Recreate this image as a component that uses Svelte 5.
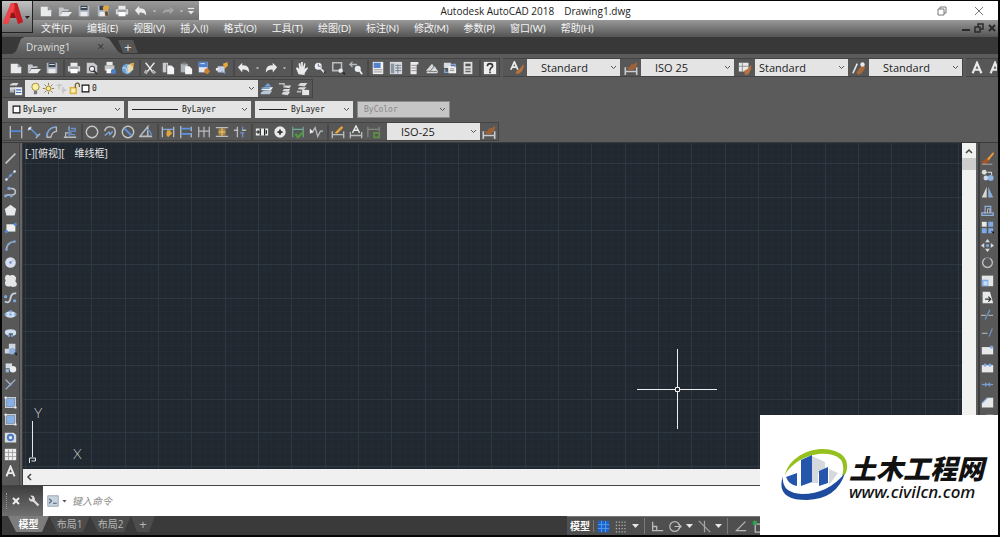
<script lang="ts">
	type Tool = [icon: string, label: string];

	const W = '#e9eaec';
	const B = '#7ea6dc';
	const G = '#b9bcc0';
	const O = '#e3a63c';

	const stroke = (d: string, color = G, width = 1.5) =>
		`<path d="${d}" fill="none" stroke="${color}" stroke-width="${width}"/>`;
	const fill = (d: string, color = W) => `<path d="${d}" fill="${color}"/>`;
	const dot = (x: number, y: number, color = B, r = 1.5) =>
		`<circle cx="${x}" cy="${y}" r="${r}" fill="${color}"/>`;

	const icons: Record<string, string> = {
		new: fill('M2 3h8l4 4v7H2z') + fill('M10 3v4h4z', '#8a8d90'),
		open: fill('M1 4h5l1 2h5v2H5l-3 6H1z', '#c3c6ca') + fill('M5 9h11l-4 5H2z'),
		save: fill('M2 2h12v12H2z', '#aeb6c2') + fill('M4 2h8v5H4z', '#3b4552') + fill('M4 9h8v5H4z') + stroke('M5 4h6', W, 1),
		saveas: fill('M2 2h12v12H2z', '#aeb6c2') + fill('M4 2h5v5H4z', '#3b4552') + fill('M4 9h6v5H4z') + fill('M8 3l5-2 2 3-3 4-4-1z', O) + fill('M10 9l3-1 1 5-3 1z', '#6b4a28'),
		print: fill('M4 2h8v4H4z') + fill('M1 6h14v6H1z', '#d5d8db') + fill('M4 9h8v5H4z', '#fff') + stroke('M3 8h10', '#555', 1),
		preview: fill('M2 2h8l4 3v9H2z', '#c9cbce') + '<circle cx="8" cy="9" r="3" fill="#eef" stroke="#444" stroke-width="1.2"/>' + stroke('M10 11l4 4', '#333', 2),
		publish: fill('M4 1h7v4H4z') + fill('M2 5h11v6H2z', '#c5c8cb') + fill('M4 9h6v5H4z', '#fff') + '<circle cx="12" cy="12" r="3" fill="#4f80c4"/>',
		web: '<circle cx="7" cy="9" r="6" fill="#6ea4d8"/>' + fill('M7 5l7-3v8l-6 4z', '#e8d9b0') + fill('M10 3l5-1-1 5z', O) + stroke('M2 8q5-2 5 6', W, 1),
		cut: stroke('M3 2l8 10M13 2L5 12', W, 1.6) + stroke('M3 11l2 1-1 2-2-1zM12 11l2 2-2 1-2-2z', G, 1.5),
		copy: fill('M2 2h6v11H2z', '#c9cbce') + fill('M7 5h5l3 3v7H7z', '#f4f4f4') + stroke('M6.500 4v10', '#555', 1),
		paste: fill('M2 3h8v10H2z', '#aeb1b5') + fill('M4 1h4v3H4z', '#777') + fill('M7 6h5l3 3v6H7z', '#f4f4f4'),
		match: fill('M2 1h10v12H2z', '#dfe4ee') + fill('M2 1h10v6H2z', '#4d7fd0') + fill('M9 9l3-1 3 4-3 3-4-2z', '#c9803a') + stroke('M4 3h5M4 10h4', W, 1),
		block: fill('M3 6h8v7H3z', '#c6d1e3') + fill('M1 8h3v3H1z', W) + fill('M9 3l5-2 1 4-4 4z', O) + stroke('M7 12l5 2', B),
		undo: fill('M1 7l5-5v3q8-1 8 8-3-4-8-3v3z', W),
		redo: fill('M15 7l-5-5v3q-8-1-8 8 3-4 8-3v3z', W),
		redoOff: fill('M15 7l-5-4v3q-8-1-8 5 3-3 8-2v3z', '#a2a4a6'),
		down: fill('M5 7h6l-3 3z', '#d0d0d0'),
		customize: stroke('M3 4h10', W, 2) + fill('M3 8h10l-5 5z', W),
		pan: fill('M4 15L1 8l2-1 2 2-1-6 2-1 1 5V1h2v6l2-5 1 1-1 6 3-2 1 1-4 6v2z'),
		zoomrt: '<circle cx="6" cy="6" r="4" fill="#edf1f5"/>' + stroke('M9 9l4 4', W, 2) + stroke('M6 3v3h3', '#667', 1) + fill('M12 12h3l-1.500 2z', '#222'),
		zoomwin: stroke('M2 2h10v9H2z', G, 1.8) + '<circle cx="11" cy="11" r="2.500" fill="#e8edf2"/>' + fill('M12 13h4v3z', '#222'),
		zoomprev: stroke('M1 4h8M4 1L1 4l3 3', G, 1.5) + '<circle cx="10" cy="9" r="3.500" fill="#e8edf2"/>' + stroke('M12 11l3 4', W, 2),
		props: fill('M2 1h12v14H2z', '#f1f1f1') + fill('M3 2h8v6H3z', '#5580d0') + stroke('M3 10h10M3 12.500h10', '#8c8c8c', 1),
		design: fill('M1 1h14v14H1z', '#d7dbe1') + fill('M2 3h4v11H2z', '#8a93a0') + stroke('M7 5h7M7 8h7M7 11h7M10 4v10', '#6c7683', 1),
		palette: fill('M4 1h9v3h-2v11H4z', '#e9e9e9') + stroke('M5 5h6M5 8h6M5 11h6', '#888', 1),
		sheet: fill('M1 11l7-8 2 3-4 5zM6 12l5-6 4 6-1 2H2v-2z', '#d8d9db') + stroke('M5 12h9', '#777', 1),
		markup: fill('M1 2h8v6H1z', '#d5dbe5') + fill('M6 6h9v8H6z', '#f2f2f2') + stroke('M9 4h5v3M2 9v4h4', B) + stroke('M8 9h5M8 11h5', '#888', 1),
		calc: fill('M3 1h10v14H3z', '#dedede') + fill('M5 3h6v3H5z', '#555') + stroke('M5 9h6M5 12h6', '#666', 1.5),
		help: fill('M1 1h14v14H1z', '#eee') + stroke('M5 6q0-3 3-3t3 3q0 1-2 2l-1 2v1M8 12v2', '#333', 1.8),
		textStyle: stroke('M1 10L5 1l4 9M3 7h4', W, 2) + fill('M7 12l4-3 1-1 3-4 1 1-2 6-3 3-4 1z', '#b9713e'),
		dimStyle: stroke('M1.500 7v9M14.500 7v9M2 12h12', '#c8ccd0', 1.8) + fill('M3 7q4 1 5-3l4-1 3-2v3l-2 4-4 3-4-1z', '#9c6238'),
		tableStyle: fill('M1 2h11v10H1z', '#e8e8e8') + stroke('M1 6h11M5 2v10', '#888', 1) + fill('M7 11l4-2 4-5v5l-3 6-4 1z', '#b9713e'),
		leaderStyle: stroke('M1 14L6 3', W, 1.8) + fill('M5 13l3-4 2-3 4-1 1 3-4 6-4 2z', '#a8683a') + dot(12, 4, W, 2.5),
		letterA: stroke('M3 14L8 2l5 12M5 10h6', W, 2.4),
		layers: fill('M1 3l3-2h7L9 4H1zM1 6h7l-2 3H1z', '#d4d7db') + fill('M1 9h5v3H1z', '#aeb5bd') + fill('M7 6h8v9H7z', '#e9eef5') + stroke('M8 9h6M8 12h6', '#4876b5', 1.2),
		layerCurrent: fill('M1 9l4-3h10l-3 4z', '#eee') + fill('M1 12l3-2h10l-3 4H1z', '#b8c6d8') + fill('M5 5l4-4 4 4z', '#6ea4e0') + fill('M2 6h9v2H2z', '#6fa0d0'),
		layerPrev: fill('M6 6l2-2h7l-2 3zM5 10l2-2h7l-2 3zM4 14l2-3h8l-3 4z', '#d7d9dc') + stroke('M1 2h6v4', G),
		layerStates: fill('M2 4l3-3h8l-3 4zM2 8l2-2h8l-3 3z', '#d9dbde') + fill('M7 9h8v6H7z', '#e6e6e6') + stroke('M1 11h5', G, 2),
		bulb: '<circle cx="8" cy="6" r="4.500" fill="#fff0a0" stroke="#8b7a35"/>' + fill('M6 11h4v4H6z', '#777'),
		sun: '<circle cx="8" cy="8" r="3" fill="#ffe978" stroke="#806d2a"/>' + stroke('M8 1v3M8 12v3M1 8h3M12 8h3M3 3l2 2M11 11l2 2M3 13l2-2M11 5l2-2', '#806d2a', 1),
		freeze: stroke('M2 4h7M5 2v7M10 6v8M8 10h6', '#c0c0c0', 1.5) + dot(11, 10, '#c8c8c8', 2),
		lock: fill('M2 6h9v9H2z', '#d9b24a') + stroke('M9 7V3q3-3 5 0v3', '#6d5a2a', 1.5) + fill('M4 8h5v5H4z', '#fff1b0'),
		swatch: '<path d="M2 2h12v12H2z" fill="#fff" stroke="#111" stroke-width="2"/>',
		dimLinear: stroke('M1.500 1v14M14.500 1v14', G) + stroke('M2 7h12', '#4f87dc', 2),
		dimAligned: stroke('M1 6l4-4M10 15l5-5', G) + stroke('M4 4l8 8', '#5f92dc', 1.8) + dot(3, 4, W) + dot(12, 12),
		dimArc: stroke('M2 14Q2 3 13 2', B, 2) + stroke('M7 14q0-6 7-7M2 14h5M13 2v5', G),
		dimOrd: stroke('M1 14h14M3 14V9h4M7 6V2', G) + stroke('M9 4h5v3H9v4h5M7 1v12', '#6b93cc'),
		dimRadius: '<circle cx="8" cy="8" r="6.500" fill="none" stroke="#c5c8cb" stroke-width="1.600"/>',
		dimJog: stroke('M2 7Q3 2 8 2q6 0 6 6 0 4-3 6', G, 1.8) + stroke('M2 12l5-4 1 3 3-4', B),
		dimDia: '<circle cx="8" cy="8" r="6.500" fill="none" stroke="#c5c8cb" stroke-width="1.600"/>' + stroke('M4 4l8 8', '#5f92dc', 2.2),
		dimAngle: stroke('M1 13L10 2v11zM1 13h14', G, 1.8) + stroke('M9 5q5 2 5 7', '#5f92dc'),
		dimQuick: stroke('M1.500 2v12M14.500 2v12', G) + stroke('M2 5h12', B) + fill('M7 6h4v2l2 1-2 2-3 3-2-3z', O),
		dimBase: stroke('M2 1v14M14 2v5M14 9v5', G) + stroke('M2 4h12M2 10h12', '#5f92dc', 2),
		dimCont: stroke('M2 2v12M8 2v12M14 2v12M2 7h12', G, 1.4),
		dimSpace: stroke('M1 3h14M1 13h14', G) + fill('M4 4h8v8H4z', '#aa8740') + stroke('M8 3v10M4 8h8', '#f3d080', 1),
		dimBreak: stroke('M1 6h5M10 6h5M5 2v12', G) + stroke('M11 2v4M11 9v5M8 9h5', '#6b93cc'),
		tolerance: fill('M1 4h14v8H1z') + stroke('M6 4v8M11 4v8M3.500 6v4M1 8h5M13 6v4', '#222', 1.4),
		centerMark: '<circle cx="8" cy="8" r="6.500" fill="#e9e9e9"/>' + stroke('M8 5v6M5 8h6', '#333', 2),
		inspect: stroke('M2 2v12M14 2v12M2 5h12', '#6fae9a', 1.2) + stroke('M5 10l3 4 6-6', '#4e9c3a', 2.5),
		jogLine: stroke('M1 8h3l3-5 3 10 3-6h3', G) + fill('M1 4l4 4-4 2z'),
		dimEdit: stroke('M1.500 7v8M14.500 7v8M2 11h12', G) + fill('M4 9l8-8 2 2-7 7z', O),
		dimTextEdit: stroke('M1.500 8v7M14.500 8v7M2 12h12', G) + stroke('M4 9l4-8 4 8M6 6h4', W),
		dimUpdate: stroke('M1 2v12M14 2v5M1 5h13', '#80877e') + stroke('M8 9h6v5H8z', '#5f8f45', 2),
		line: stroke('M2 14L14 2', '#c7cace', 1.8),
		xline: stroke('M2 14L14 2', '#5e8cd0', 1.5) + dot(3, 13, W) + dot(13, 3, W) + dot(8, 8),
		pline: stroke('M5 3h4q5 0 5 4t-5 4H3', '#c2c6cc', 1.8) + dot(2, 12, B, 2) + dot(9, 12, B, 2) + dot(6, 3, B, 2),
		polygon: fill('M8 1l7 5-2 8H3L1 6z', '#e6e7e8'),
		rect: fill('M3 4h11v9H3z', '#eceded') + dot(3, 13, '#4f87dc', 2) + dot(14, 4, '#4f87dc', 2),
		arc: stroke('M3 14Q3 4 13 3', '#9db4d2', 1.8) + dot(3, 13) + dot(13, 3) + dot(6, 6),
		circle: '<circle cx="8" cy="8" r="6.500" fill="#d9dfee"/>' + dot(8, 8, '#6285c8', 1.5) + stroke('M8 8l4-3', '#8fa9db', 1),
		cloud: fill('M2 2q3-2 5 0 4-2 7 1l1 2-1 4 2 3-1 3-4 1-3-1q-4 1-6-1l-1-3 1-3-1-3z', '#e4e5e6'),
		spline: stroke('M1 13q6 3 7-4t7-6', '#c4d2e3', 2.2) + dot(2, 7, B, 2) + dot(13, 12, B, 2),
		ellipse: '<ellipse cx="8" cy="8" rx="7" ry="4" fill="#cfdff0"/>' + dot(8, 8) + dot(2, 8) + dot(14, 8) + dot(8, 4),
		ellipseArc: '<path d="M1 8q0-4 7-4t7 4-4 4v-3H6v3Q1 11 1 8" fill="#cfdff0"/>' + dot(6, 12) + dot(10, 12),
		insert: fill('M6 1h8v7H6zM1 7h6v6H1z', '#cdd5df') + '<circle cx="10" cy="10" r="4" fill="#8fb2e0"/>' + fill('M12 12h4v4z', '#222'),
		makeBlock: fill('M2 3h8v6H2z', '#d5dce5') + '<circle cx="11" cy="10" r="4" fill="#e9ecf0"/>' + fill('M2 10h4v4H2z', '#94b8e8'),
		point: stroke('M2 2l6 6 6-6M8 8l-6 6', '#aab6c8', 1.6) + dot(8, 8),
		hatch: fill('M3 3h10v10H3z', '#87b0e6') + stroke('M2 2h12v12H2z', '#c8cdd5', 1.5) + dot(2, 2, W) + dot(14, 14, W),
		region: fill('M1 2h11l3 3v9H1z', '#d8dde4') + '<circle cx="8" cy="8" r="4.500" fill="#4c7cc4"/>' + dot(8, 8, W, 2),
		table: fill('M1 1h14v14H1z', '#eee') + stroke('M1 5.500h14M1 10.500h14M5.500 2v13M10.500 2v13', '#9a9a9a', 1),
		erase: fill('M7 9l8-9 1 2-7 9z', '#e69a3a') + fill('M2 11l5-3 3 3-4 4-4 0z', '#a55426') + stroke('M1 15h13', '#bbb', 1),
		copyObj: '<circle cx="4" cy="4" r="3" fill="#ddd"/><circle cx="6" cy="11" r="3" fill="#cfd8e5"/><circle cx="12" cy="11" r="3.500" fill="#8fb4e8"/>' + stroke('M8 4h5v3', W, 1.2),
		mirror: fill('M7 1v13H1z', '#d8d8d8') + fill('M9 1v13h6z', '#89afdc'),
		offset: stroke('M1 14h14v-3h-3V3H5v8H1z', '#8db0e2') + stroke('M4 11h7V6H8v5', '#ccd', 1),
		array: fill('M1 1h6v6H1z', '#e8e8e8') + fill('M9 1h6v6H9zM1 9h6v6H1zM9 9h6v6H9z', '#7fa9e6') + fill('M12 13h4v3z', '#111'),
		move: fill('M8 0l3 4H5zM8 16l3-4H5zM0 8l4-3v6zM16 8l-4-3v6z', '#d6dce5') + dot(8, 8, B, 2),
		rotate: stroke('M11 3a6 6 0 1 1-6 0', '#b9bdc2', 1.8) + stroke('M4 4q4-4 8 0', '#8e9297', 1.2),
		scale: fill('M1 2h14v13H1z', '#e4e6e8') + fill('M1 7h8v8H1z', '#7fa9e6') + fill('M3 9h5v5H3z', '#c9dcf6'),
		stretch: fill('M2 1h9l4 14H2z', '#e7e9eb') + stroke('M5 10h6M9 7l3 3-3 3', '#333', 1.5),
		trim: stroke('M0 9h6M9 9h6', '#a9adb2') + stroke('M5 14l6-12', '#6e93c8'),
		extend: stroke('M1 9h7', '#a9adb2') + stroke('M10 13l4-10', '#6e93c8'),
		breakAt: fill('M1 5h14v9H1z', '#e6e8ea') + dot(13, 5, '#7fa9e6', 2),
		break: fill('M1 5h14v9H1z', '#e6e8ea') + dot(5, 5, '#7fa9e6', 2) + dot(11, 5, '#7fa9e6', 2),
		join: stroke('M1 8h14', '#7b9ed0', 1.6) + fill('M5 5l3 3-3 3zM11 5L8 8l3 3z', '#7b9ed0'),
		chamfer: fill('M1 14V9l7-7h7v12z', '#e6e8ea') + stroke('M1 9l7-7', '#7fa9e6', 1.5),
		wrench: stroke('M7 7l7 7', '#dedede', 3) + fill('M1 3l3 3 2-2-3-3q5-1 6 3 1 5-3 5-5 0-5-6', '#dedede'),
		prompt: '<path d="M1 1h14v14H1z" fill="#c9d3de" stroke="#8494a5"/>' + stroke('M3 5l3 3-3 3M8 11h5', '#4a6078', 1.5),
		gridOn: fill('M1 1h14v14H1z', '#1e63c4') + stroke('M1 5.500h14M1 10.500h14M5.500 1v14M10.500 1v14', '#4f98f0', 1.2),
		snap: '<path d="M1 2.500h14M1 6.500h14M1 10.500h14M1 14.500h14" stroke="#b4b4b4" stroke-width="1.500" stroke-dasharray="1.500 2"/>',
		ortho: stroke('M2 2v11h13M2 8h5v5', G, 1.6),
		polar: '<circle cx="7" cy="8" r="6" fill="none" stroke="#b9bcc0" stroke-width="1.500"/>' + stroke('M7 8h8M12 5l3 3-3 3', G, 1.3),
		iso: stroke('M1 1l14 14M8 8V1M8 8v7', '#a3a6a9', 1.5),
		otrack: stroke('M14 2L3 13h12', G, 1.5),
		osnap: stroke('M4 5h10v10H4z', G, 1.6) + fill('M1 1h5v5H1z', '#2ea44f')
	};

	const menus = [
		'文件(F)', '编辑(E)', '视图(V)', '插入(I)', '格式(O)', '工具(T)',
		'绘图(D)', '标注(N)', '修改(M)', '参数(P)', '窗口(W)', '帮助(H)'
	];

	const quickAccess: Tool[] = [
		['new', '新建'], ['open', '打开'], ['save', '保存'], ['saveas', '另存为'], ['print', '打印'], ['undo', '放弃']
	];

	const standardGroups: Tool[][] = [
		[['new', '新建'], ['open', '打开'], ['save', '保存']],
		[['print', '打印'], ['preview', '打印预览'], ['publish', '发布'], ['web', '三维 DWF']],
		[['cut', '剪切'], ['copy', '复制'], ['paste', '粘贴'], ['match', '特性匹配'], ['block', '块编辑器']],
		[['undo', '放弃'], ['down', '放弃列表'], ['redo', '重做'], ['down', '重做列表']],
		[['pan', '平移'], ['zoomrt', '实时缩放'], ['zoomwin', '窗口缩放'], ['zoomprev', '缩放上一个']],
		[['props', '特性'], ['design', '设计中心'], ['palette', '工具选项板'], ['sheet', '图纸集'], ['markup', '标记集'], ['calc', '计算器']],
		[['help', '帮助']]
	];

	const styles = [
		{ icon: 'textStyle', label: '文字样式', value: 'Standard', tight: false },
		{ icon: 'dimStyle', label: '标注样式', value: 'ISO 25', tight: false },
		{ icon: 'tableStyle', label: '表格样式', value: 'Standard', tight: true },
		{ icon: 'leaderStyle', label: '多重引线样式', value: 'Standard', tight: false }
	];

	const layerTools: Tool[] = [
		['layerCurrent', '置为当前'], ['layerPrev', '上一个图层'], ['layerStates', '图层状态']
	];

	const dimensionGroups: Tool[][] = [
		[['dimLinear', '线性'], ['dimAligned', '对齐'], ['dimArc', '弧长'], ['dimOrd', '坐标']],
		[['dimRadius', '半径'], ['dimJog', '折弯'], ['dimDia', '直径'], ['dimAngle', '角度']],
		[['dimQuick', '快速标注'], ['dimBase', '基线'], ['dimCont', '连续'], ['dimSpace', '等距标注'], ['dimBreak', '折断标注']],
		[['tolerance', '公差'], ['centerMark', '圆心标记'], ['inspect', '检验'], ['jogLine', '折弯线性']],
		[['dimEdit', '编辑标注'], ['dimTextEdit', '编辑标注文字'], ['dimUpdate', '标注更新']]
	];

	const drawTools: Tool[] = [
		['line', '直线'], ['xline', '构造线'], ['pline', '多段线'], ['polygon', '多边形'], ['rect', '矩形'],
		['arc', '圆弧'], ['circle', '圆'], ['cloud', '修订云线'], ['spline', '样条曲线'], ['ellipse', '椭圆'],
		['ellipseArc', '椭圆弧'], ['insert', '插入块'], ['makeBlock', '创建块'], ['point', '点'], ['hatch', '图案填充'],
		['hatch', '渐变色'], ['region', '面域'], ['table', '表格'], ['letterA', '多行文字']
	];

	const modifyTools: Tool[] = [
		['erase', '删除'], ['copyObj', '复制'], ['mirror', '镜像'], ['offset', '偏移'], ['array', '阵列'],
		['move', '移动'], ['rotate', '旋转'], ['scale', '缩放'], ['stretch', '拉伸'], ['trim', '修剪'],
		['extend', '延伸'], ['breakAt', '打断于点'], ['break', '打断'], ['join', '合并'], ['chamfer', '倒角'],
		['chamfer', '圆角'], ['spline', '光顺曲线'], ['scale', '分解'], ['move', '绘图次序']
	];

	const layouts = ['模型', '布局1', '布局2'];
	const gridMinor = [7, 13, 20, 27, 40, 47, 53, 60, 73, 80, 87, 93];
	const gridMajor = [0, 33, 67];

	let activeLayout = $state('模型');
	let command = $state('');
	let cursor = $state({ x: 654, y: 246 });

	function trackCursor(e: MouseEvent) {
		const box = (e.currentTarget as HTMLElement).getBoundingClientRect();
		cursor = { x: Math.round(e.clientX - box.left), y: Math.round(e.clientY - box.top) };
	}
</script>

{#snippet icon(name: string)}
	<svg class="icon" viewBox="0 0 16 16" aria-hidden="true">{@html icons[name]}</svg>
{/snippet}

{#snippet tool([name, label]: Tool)}
	<button class="tool" class:narrow={name === 'down'} title={label} aria-label={label}>
		{@render icon(name)}
	</button>
{/snippet}

{#snippet groups(list: Tool[][])}
	{#each list as group}
		<div class="group">
			{#each group as item}{@render tool(item)}{/each}
		</div>
	{/each}
{/snippet}

<div class="app">
	<header>
		<button class="app-menu" aria-label="应用程序菜单">
			<svg viewBox="0 0 30 30" aria-hidden="true">
				<path d="M1 21L9 1h6l6 19-5 2-2-6H8l-2 6z" fill="#d8262c" />
				<path d="M9 1h5l-2 6-6 15-5-1z" fill="#ef4448" />
				<path d="M9 11h3l2 5H8z" fill="#8f1519" />
				<path d="M12 1h3l6 19-5 2z" fill="#c01d24" />
				<path d="M23 14h5l-3 3z" fill="#222" />
			</svg>
		</button>
		<div class="title-bar">
			<div class="quick-access">
				{#each quickAccess as item}{@render tool(item)}{/each}
				{@render tool(['down', '放弃列表'])}
				{@render tool(['redoOff', '重做'])}
				{@render tool(['down', '重做列表'])}
				{@render tool(['customize', '自定义'])}
			</div>
			<h1><span>Autodesk AutoCAD 2018</span><span>Drawing1.dwg</span></h1>
			<div class="window-buttons">
				<button aria-label="还原">
					<svg viewBox="0 0 10 10"><path d="M1 3h6v6H1zM3 3V1h6v6H7" fill="none" stroke="#777" /></svg>
				</button>
				<button aria-label="关闭">
					<svg viewBox="0 0 10 10"><path d="M1 1l8 8M9 1L1 9" stroke="#777" /></svg>
				</button>
			</div>
		</div>
		<nav class="menu-bar">
			{#each menus as menu}<button>{menu}</button>{/each}
			<div class="doc-buttons">
				<button aria-label="最小化图形">
					<svg viewBox="0 0 10 10"><path d="M1 7h8" stroke="#2b2b2b" stroke-width="2" /></svg>
				</button>
				<button aria-label="还原图形">
					<svg viewBox="0 0 10 10"><path d="M1 4h5v5H1zM4 4V1h5v5H6" fill="none" stroke="#2b2b2b" stroke-width="1.500" /></svg>
				</button>
				<button aria-label="关闭图形">
					<svg viewBox="0 0 10 10"><path d="M2 2l6 6M8 2L2 8" stroke="#2b2b2b" stroke-width="2" /></svg>
				</button>
			</div>
		</nav>
	</header>

	<div class="file-tabs">
		<div class="file-tab">
			<button class="tab-name">Drawing1</button>
			<button class="tab-close" aria-label="关闭选项卡">×</button>
		</div>
		<button class="new-tab" aria-label="新图形">+</button>
	</div>

	<div class="toolbars">
		<div class="bar-row">
			<div class="bar">{@render groups(standardGroups)}</div>
			<div class="bar styles">
				{#each styles as s}
					{@render tool([s.icon, s.label])}
					<select class="style-select" class:tight={s.tight} aria-label={s.label}>
						<option>{s.value}</option>
					</select>
				{/each}
			</div>
			<div class="bar text-bar">
				{@render tool(['letterA', '多行文字'])}
				{@render tool(['letterA', '单行文字'])}
			</div>
		</div>

		<div class="bar-row">
			<div class="bar">
				<div class="group">{@render tool(['layers', '图层特性'])}</div>
				<label class="combo layer">
					{#each ['bulb', 'sun', 'freeze', 'lock', 'swatch'] as name}{@render icon(name)}{/each}
					<select aria-label="图层"><option>0</option></select>
				</label>
				<div class="group">{#each layerTools as item}{@render tool(item)}{/each}</div>
			</div>
		</div>

		<div class="bar-row properties">
			<label class="combo color">
				{@render icon('swatch')}
				<select aria-label="颜色"><option>ByLayer</option></select>
			</label>
			<label class="combo linetype">
				<span class="sample"></span>
				<select aria-label="线型"><option>ByLayer</option></select>
			</label>
			<label class="combo weight">
				<span class="sample"></span>
				<select aria-label="线宽"><option>ByLayer</option></select>
			</label>
			<label class="combo plot">
				<select aria-label="打印样式" disabled><option>ByColor</option></select>
			</label>
		</div>

		<div class="bar-row">
			<div class="bar">
				{@render groups(dimensionGroups)}
				<select class="style-select" aria-label="当前标注样式"><option>ISO-25</option></select>
				{@render tool(['dimStyle', '标注样式管理器'])}
			</div>
		</div>
	</div>

	<main>
		<div class="side-bar">
			{#each drawTools as item}{@render tool(item)}{/each}
		</div>
		<div class="viewport">
			<!-- svelte-ignore a11y_no_static_element_interactions -->
			<div class="canvas" onmousemove={trackCursor}>
				<svg class="grid" width="100%" height="100%" aria-hidden="true">
					<defs>
						<pattern id="grid" x="35" y="54" width="100" height="101" patternUnits="userSpaceOnUse">
							{#each gridMinor as n}
								<path d="M{n} 0h1v101h-1zM0 {n}h100v1H0z" fill="#232b35" />
							{/each}
							{#each gridMajor as n}
								<path d="M{n} 0h1v101h-1zM0 {n}h100v1H0z" fill="#2e3842" />
							{/each}
						</pattern>
					</defs>
					<rect width="100%" height="100%" fill="url(#grid)" />
				</svg>
				<div class="view-label">
					<button>[-]</button><button>[俯视]</button><button>[　维线框]</button>
				</div>
				<svg class="ucs" viewBox="0 0 70 64" aria-hidden="true">
					<path d="M9.500 16v36M6.500 58v-5h6v3h-4" fill="none" stroke="#e4e6e8" />
					<text x="11" y="13">Y</text>
					<text x="50" y="54">X</text>
				</svg>
				<svg class="cursor" viewBox="0 0 80 80" style="left: {cursor.x}px; top: {cursor.y}px" aria-hidden="true">
					<path d="M0 40.500h38M43 40.500h37M40.500 0v38M40.500 43v37M38.500 38.500h4v4h-4z" fill="none" stroke="#f0f0f0" />
				</svg>
			</div>
			<div class="v-scroll">
				<button aria-label="向上滚动">
					<svg viewBox="0 0 10 10"><path d="M2 7l3-3 3 3" fill="none" stroke="#444" stroke-width="1.500" /></svg>
				</button>
				<div class="thumb"></div>
			</div>
			<div class="h-scroll">
				<button aria-label="向左滚动">
					<svg viewBox="0 0 10 10"><path d="M6 2L3 5l3 3" fill="none" stroke="#444" stroke-width="1.500" /></svg>
				</button>
			</div>
		</div>
		<div class="side-bar right">
			{#each modifyTools as item}{@render tool(item)}{/each}
		</div>
	</main>

	<div class="command">
		<div class="command-handle">
			<span class="grip"></span>
			<button aria-label="关闭命令行">
				<svg viewBox="0 0 10 10"><path d="M2 2l6 6M8 2L2 8" stroke="#eee" stroke-width="2" /></svg>
			</button>
			{@render tool(['wrench', '自定义'])}
		</div>
		<button class="prompt" aria-label="最近使用的命令">{@render icon('prompt')}<span class="caret"></span></button>
		<input type="text" aria-label="命令" placeholder="键入命令" bind:value={command} />
	</div>

	<footer>
		<div class="layout-tabs">
			{#each layouts as layout}
				<button class:active={activeLayout === layout} onclick={() => (activeLayout = layout)}>{layout}</button>
			{/each}
			<button class="add">+</button>
		</div>
		<div class="status">
			<button class="space">模型</button>
			{@render tool(['gridOn', '栅格'])}
			{@render tool(['snap', '捕捉'])}
			<button class="drop" aria-label="捕捉设置"></button>
			<i></i>
			{@render tool(['ortho', '正交'])}
			{@render tool(['polar', '极轴追踪'])}
			<button class="drop" aria-label="极轴设置"></button>
			{@render tool(['iso', '等轴测草图'])}
			<button class="drop" aria-label="等轴测设置"></button>
			<i></i>
			{@render tool(['otrack', '对象捕捉追踪'])}
			{@render tool(['osnap', '对象捕捉'])}
		</div>
	</footer>

	<a class="brand" href="http://www.civilcn.com">
		<svg viewBox="0 0 68 56" aria-hidden="true">
			<path d="M4 27C8 7 36-4 54 3q16 6 11 22l-4 3Q66 11 52 7C34 2 12 12 4 27" fill="#95c11f" />
			<path d="M2 28q-2 17 19 18 26 0 43-21-8 26-38 27Q-6 52 2 28" fill="#1f4b9f" />
			<path d="M31 8l13 6v8l-7 3v10h-6z" fill="#d5d9de" />
			<path d="M48 21l9 4-9 12z" fill="#d5d9de" />
			<path d="M20 12l11-5v27l-11 4z" fill="#2556ac" />
			<path d="M38 23l9-4v16l-9 3zM5 29l11-4v13q-8-1-11-9" fill="#2556ac" />
		</svg>
		<span class="brand-text">
			<strong>土木工程网</strong>
			<em>www.civilcn.com</em>
		</span>
	</a>
</div>

<style>
	:global(body) {
		margin: 0;
		background: #000;
	}

	.app {
		box-sizing: border-box;
		position: relative;
		display: flex;
		flex-direction: column;
		min-height: 100vh;
		overflow: hidden;
		border: 2px solid #060606;
		border-top-width: 1px;
		background: #5b5b5b;
		color: #e8e8e8;
		font-family: 'Open Sans', 'Noto Sans CJK SC', sans-serif;
		font-size: 10px;
		line-height: 12px;
	}

	button,
	select,
	input {
		box-sizing: border-box;
		margin: 0;
		padding: 0;
		border: 0;
		border-radius: 0;
		background: none;
		color: inherit;
		font: inherit;
	}

	button {
		cursor: pointer;
	}

	.icon {
		display: block;
		flex: none;
		width: 14px;
		height: 14px;
	}

	.tool {
		display: flex;
		flex: none;
		align-items: center;
		justify-content: center;
		width: 18px;
		height: 16px;
	}

	.tool:hover {
		background: #7288a3;
	}

	.tool.narrow {
		width: 9px;
	}

	.tool.narrow .icon {
		width: 9px;
	}

	/* title and menus */
	header {
		display: grid;
		grid-template-columns: 31px minmax(0, 1fr);
		grid-template-rows: 19px 17px;
		background: linear-gradient(#a0a0a0 50%, #999 52%, #545454);
	}

	.app-menu {
		z-index: 1;
		grid-row: 1 / 3;
		height: 32px;
		border-right: 1px solid #222;
		border-bottom: 1px solid #222;
		background: linear-gradient(#c2c2c2, #6a6a6a);
	}

	.app-menu svg {
		display: block;
		width: 30px;
		height: 30px;
	}

	.title-bar {
		display: flex;
		align-items: center;
		background: #fff;
	}

	.quick-access {
		display: flex;
		align-items: center;
		height: 19px;
		padding: 0 2px 0 3px;
		background: linear-gradient(#9a9a9a, #707070);
	}

	.quick-access .tool {
		width: 19px;
	}

	.quick-access .tool.narrow {
		width: 8px;
	}

	.quick-access .tool:last-child {
		width: 12px;
	}

	.quick-access .tool:last-child .icon {
		width: 10px;
	}

	h1 {
		display: flex;
		flex: 1;
		gap: 10px;
		justify-content: center;
		margin: 0;
		color: #222;
		font-size: 10px;
		font-weight: 400;
	}

	.window-buttons {
		display: flex;
		gap: 27px;
		justify-content: flex-end;
		width: 126px;
		padding-right: 14px;
		box-sizing: border-box;
	}

	.window-buttons svg,
	.doc-buttons svg {
		display: block;
		width: 10px;
		height: 10px;
	}

	.menu-bar {
		display: flex;
		gap: 15px;
		align-items: center;
		padding: 0 0 1px 8px;
		color: #f4f4f4;
		font-family: Lato, 'Noto Sans CJK SC', sans-serif;
		white-space: nowrap;
	}

	.doc-buttons {
		display: flex;
		gap: 3px;
		margin-left: auto;
		padding-right: 1px;
	}

	/* open drawings */
	.file-tabs {
		display: flex;
		align-items: flex-end;
		height: 17px;
		background: #383838;
	}

	.file-tab {
		display: flex;
		align-items: center;
		justify-content: space-between;
		width: 110px;
		height: 17px;
		box-sizing: border-box;
		margin-left: 10px;
		padding: 2px 18px 0 14px;
		background: linear-gradient(#7a7a7a, #5b5b5b);
		clip-path: polygon(0 100%, 4px 85%, 9px 10%, 13px 0, 92px 0, 97px 10%, 106px 85%, 100% 100%);
		color: #dedede;
	}

	.tab-close {
		color: #333;
		font-size: 12px;
	}

	.new-tab {
		width: 20px;
		height: 13px;
		margin: 0 0 1px -4px;
		background: #555;
		clip-path: polygon(0 0, 75% 0, 100% 100%, 25% 100%);
		color: #ddd;
		font-size: 13px;
	}

	/* toolbars */
	.toolbars {
		display: flex;
		flex-direction: column;
		gap: 2px;
		padding: 4px 0 1px;
		border-bottom: 1px solid #3a3a3a;
	}

	.bar-row {
		display: flex;
		gap: 3px;
		min-width: 0;
		overflow: hidden;
	}

	.bar {
		display: flex;
		flex: none;
		align-items: center;
		height: 19px;
		box-sizing: border-box;
		padding-left: 5px;
		border: 1px solid #444;
		border-left: 0;
		background: #575757;
	}

	.bar.styles {
		padding-left: 3px;
	}

	.bar.text-bar {
		flex: 1;
		overflow: hidden;
		padding-left: 2px;
	}

	.group {
		display: flex;
	}

	.group + .group,
	.group + .style-select {
		margin-left: 4px;
	}

	.group + .group {
		box-shadow: -2px 0 #484848;
	}

	.styles .tool {
		width: 21px;
	}

	select {
		height: 17px;
		background: #e4e4e4 url("data:image/svg+xml,%3Csvg xmlns='http://www.w3.org/2000/svg' width='7' height='5'%3E%3Cpath d='M1 1l2.500 2.500L6 1' fill='none' stroke='%23555'/%3E%3C/svg%3E") no-repeat right 3px center;
		color: #1c1c1c;
		appearance: none;
	}

	.style-select {
		width: 93px;
		padding-left: 14px;
		font-size: 11px;
	}

	.style-select.tight {
		padding-left: 4px;
	}

	.combo {
		display: flex;
		align-items: center;
		height: 17px;
		box-sizing: border-box;
		padding-left: 4px;
		background: #e4e4e4;
		font-family: 'DejaVu Sans Mono', monospace;
		font-size: 8px;
	}

	.combo select {
		flex: 1;
		min-width: 0;
		padding-left: 2px;
	}

	.combo .icon {
		width: 13px;
		height: 13px;
	}

	.combo.layer {
		width: 233px;
	}

	.combo.layer .icon:last-of-type,
	.combo.color .icon {
		width: 9px;
		height: 9px;
	}

	.properties {
		gap: 4px;
		padding: 1px 0 2px 6px;
	}

	.combo.color {
		width: 116px;
	}

	.combo.linetype {
		width: 123px;
	}

	.combo.weight {
		width: 98px;
	}

	.combo.plot {
		width: 93px;
		box-sizing: border-box;
		border: 1px solid #8c8c8c;
		background: #c6c6c6;
	}

	.combo.plot select {
		height: 15px;
		background-color: #c6c6c6;
		color: #888;
		opacity: 1;
	}

	.sample {
		width: 46px;
		height: 1px;
		margin-right: 2px;
		background: #222;
	}

	.weight .sample {
		width: 28px;
	}

	/* drawing area */
	main {
		display: flex;
		flex: 1;
		min-height: 320px;
	}

	.side-bar {
		display: flex;
		flex: none;
		flex-direction: column;
		align-items: center;
		justify-content: space-between;
		width: 21px;
		padding: 7px 3px 5px 0;
		box-sizing: border-box;
		border-right: 1px solid #3a3a3a;
		background: linear-gradient(90deg, #585858 17px, #444 17px, #444 18px, #666 18px);
	}

	.side-bar.right {
		width: 22px;
		padding: 7px 3px 5px 4px;
		border: 0;
		background: linear-gradient(90deg, #5c5c5c 2px, #3c3c3c 2px, #3c3c3c 4px, #585858 4px);
	}

	.side-bar .icon {
		width: 13px;
		height: 13px;
	}

	.viewport {
		display: grid;
		flex: 1;
		grid-template-columns: minmax(0, 1fr) 14px;
		grid-template-rows: minmax(0, 1fr) 16px;
		min-width: 0;
	}

	.canvas {
		position: relative;
		overflow: hidden;
		background: #212830;
		cursor: none;
	}

	.grid {
		position: absolute;
		inset: 0;
	}

	.view-label {
		position: absolute;
		top: 4px;
		left: 2px;
		display: flex;
	}

	.ucs {
		position: absolute;
		bottom: 0;
		left: 0;
		width: 70px;
		height: 64px;
	}

	.ucs text {
		fill: #c8ccd0;
		font-family: Lato, sans-serif;
		font-size: 14px;
		font-weight: 300;
	}

	.cursor {
		position: absolute;
		width: 80px;
		height: 80px;
		margin: -40px 0 0 -40px;
	}

	.v-scroll {
		background: #f1f1ef;
	}

	.v-scroll button,
	.h-scroll button {
		display: flex;
		align-items: center;
		justify-content: center;
		width: 14px;
		height: 15px;
	}

	.v-scroll svg,
	.h-scroll svg {
		width: 10px;
		height: 10px;
	}

	.thumb {
		height: 12px;
		background: #cdcdcd;
	}

	.h-scroll {
		grid-column: 1 / 3;
		background: #f0f0f0;
	}

	/* command line */
	.command {
		display: flex;
		align-items: center;
		height: 30px;
		border-top: 1px solid #444;
		background: #fff;
	}

	.command-handle {
		display: flex;
		gap: 4px;
		align-items: center;
		width: 41px;
		height: 100%;
		box-sizing: border-box;
		padding-left: 4px;
		background: linear-gradient(#3e3e3e, #707070);
	}

	.command-handle svg {
		display: block;
		width: 10px;
		height: 10px;
	}

	.command-handle .tool .icon {
		width: 12px;
		height: 12px;
	}

	.grip {
		width: 1px;
		height: 16px;
		border-left: 1px dotted #999;
	}

	.prompt {
		display: flex;
		gap: 3px;
		align-items: center;
		padding: 0 5px 0 4px;
	}

	.prompt .icon {
		width: 12px;
		height: 12px;
	}

	.caret {
		width: 5px;
		height: 3px;
		background: #555;
		clip-path: polygon(0 0, 100% 0, 50% 100%);
	}

	.command input {
		flex: 1;
		min-width: 0;
		height: 100%;
		outline: none;
		color: #333;
	}

	.command input::placeholder {
		color: #8a8a8a;
		font-style: italic;
		opacity: 1;
	}

	/* layouts and status */
	footer {
		display: flex;
		justify-content: space-between;
		height: 19px;
		background: #3a3a3a;
	}

	.layout-tabs {
		display: flex;
		padding-left: 6px;
	}

	.layout-tabs button {
		width: 41px;
		height: 16px;
		background: #4c4c4c;
		clip-path: polygon(0 0, 100% 0, 34px 100%, 8px 100%);
		color: #b5b5b5;
	}

	.layout-tabs button.active {
		background: #7d7d7d;
		color: #fff;
		font-weight: 700;
	}

	.layout-tabs .add {
		width: 24px;
		clip-path: polygon(0 0, 100% 0, 18px 100%, 6px 100%);
		font-size: 13px;
	}

	.status {
		display: flex;
		align-items: center;
		width: 431px;
		background: #4f4f4f;
		border-top: 1px solid #777;
		box-sizing: border-box;
	}

	.space {
		padding: 0 3px;
		border-right: 1px solid #777;
		color: #fff;
		font-weight: 700;
	}

	.status i {
		width: 1px;
		height: 16px;
		margin: 0 3px;
		background: #7a7a7a;
	}

	.status .tool .icon {
		width: 13px;
		height: 13px;
	}

	.drop {
		width: 7px;
		height: 4px;
		margin: 0 2px;
		background: #e8e8e8;
		clip-path: polygon(0 0, 100% 0, 50% 100%);
	}

	/* site badge over the corner */
	.brand {
		position: absolute;
		right: -2px;
		bottom: -2px;
		display: flex;
		align-items: center;
		width: 240px;
		height: 122px;
		box-sizing: border-box;
		padding-left: 21px;
		background: #fff;
		color: #111;
		text-decoration: none;
	}

	.brand svg {
		flex: none;
		width: 68px;
		height: 56px;
	}

	.brand-text {
		display: flex;
		flex-direction: column;
		gap: 1px;
		padding-top: 2px;
		white-space: nowrap;
	}

	.brand strong {
		font-family: 'Noto Sans CJK SC', sans-serif;
		font-size: 27px;
		font-style: italic;
		font-weight: 900;
		line-height: 28px;
	}

	.brand em {
		font-family: 'Noto Sans', sans-serif;
		font-size: 17px;
		font-weight: 500;
		line-height: 17px;
	}
</style>
